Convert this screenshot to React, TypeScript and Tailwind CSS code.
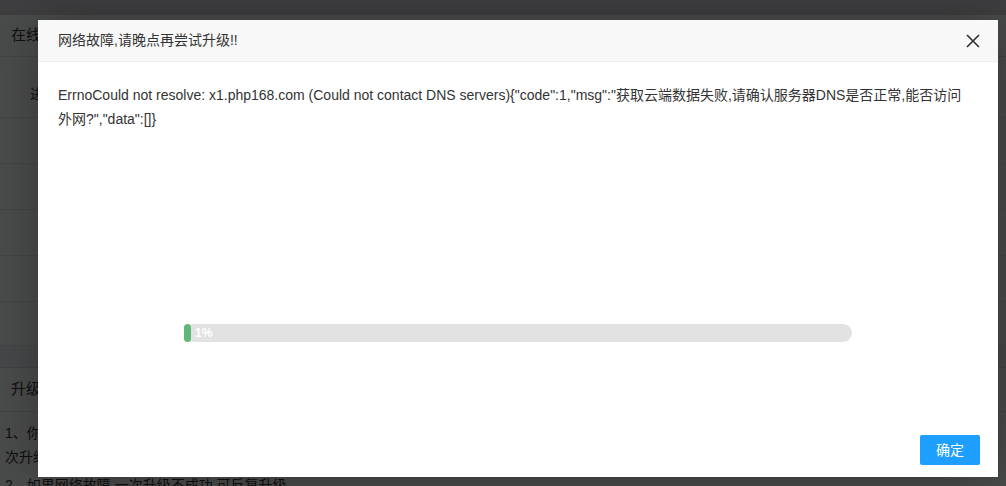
import React from 'react';

const font = { fontFamily: '"Liberation Sans", "Noto Sans CJK SC", sans-serif' };

function BackgroundPage() {
  return (
    <div className="bg-[#f9fafc] text-[#333] h-full">
      <div className="h-[15px] bg-[#d2d4da]" />
      <div className="h-[42px] flex items-center px-[11px] text-[15px] border-b border-[#e2e3e6]">在线升级</div>
      <div className="h-[61px] flex items-center pl-[30px] pt-[14px] text-[14px] border-b border-[#e6e6e6]">进度</div>
      <div className="h-[46px] border-b border-[#e6e6e6]" />
      <div className="h-[46px] border-b border-[#e6e6e6]" />
      <div className="h-[46px] border-b border-[#e6e6e6]" />
      <div className="h-[46px] border-b border-[#e6e6e6]" />
      <div className="h-[44px] border-b border-[#e6e6e6]" />
      <div className="h-[22px] bg-[#eef0f3] border-b border-[#dcdde0]" />
      <div className="h-[44px] flex items-center px-[11px] text-[15px] border-b border-[#e2e3e6]">升级说明</div>
      <div className="px-[5px] pt-[9px] text-[14px] leading-[24px]">
        <p>1、你好，请在升级前先做好备份，如果网络故障导致升级失败，可以重新再进行升级，每次升级会自动覆盖</p>
        <p>次升级的文件</p>
        <p className="mt-[4px]">2、如果网络故障,一次升级不成功,可反复升级</p>
      </div>
    </div>
  );
}

export default function App() {
  return (
    <div className="relative w-[1006px] h-[486px] overflow-hidden" style={font}>
      <BackgroundPage />
      <div className="absolute inset-0 bg-black/70" />

      {/* dialog */}
      <div className="absolute left-[38px] top-[20px] w-[960px] h-[457px] bg-white flex flex-col shadow-[1px_1px_50px_rgba(0,0,0,0.3)]">
        <div className="h-[42px] shrink-0 flex items-center justify-between pl-5 pr-4 bg-[#f8f8f8] border-b border-[#eee] text-[14px] text-[#333]">
          <span>网络故障,请晚点再尝试升级!!</span>
          <svg width="14" height="14" viewBox="0 0 14 14" className="mr-[2px]">
            <path d="M1 1 L13 13 M13 1 L1 13" stroke="#2f2f2f" strokeWidth="1.6" fill="none" />
          </svg>
        </div>

        <div className="flex-1 flex flex-col">
          <div className="px-5 pt-[21px] text-[14px] leading-[24px] text-[#333]">
            ErrnoCould not resolve: x1.php168.com (Could not contact DNS servers){'{'}"code":1,"msg":"获取云端数据失败,请确认服务器DNS是否正常,能否访问
            <br />
            外网?","data":[]{'}'}
          </div>

          <div className="mt-[193px] mx-auto w-[668px] h-[18px] rounded-full bg-[#e2e2e2] flex items-center">
            <div className="w-[7px] h-[18px] rounded-full bg-[#5fb878]" />
            <span className="ml-[4px] text-[12px] font-bold text-white">1%</span>
          </div>

          <div className="flex-1" />

          <div className="flex justify-end pr-[18px] pb-[12px]">
            <button className="w-[60px] h-[30px] rounded-[2px] bg-[#1e9fff] text-white text-[14px]">确定</button>
          </div>
        </div>
      </div>
    </div>
  );
}
